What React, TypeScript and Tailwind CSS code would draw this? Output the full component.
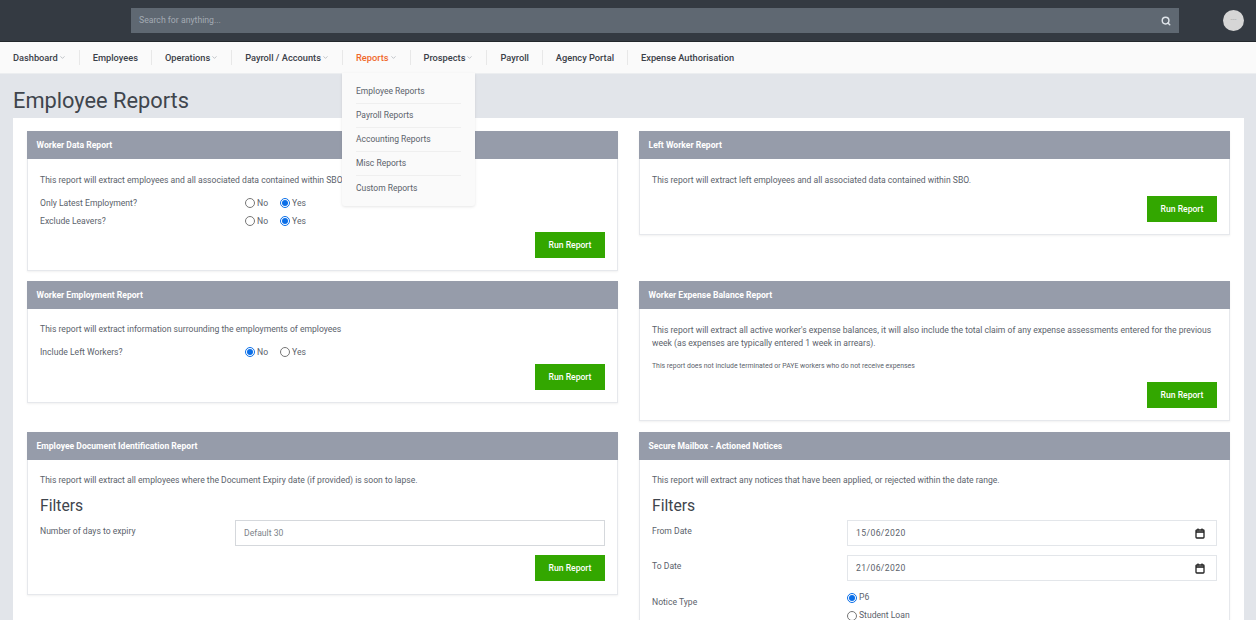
import { ChevronDown, Search } from 'lucide-react'
import type { ReactNode } from 'react'

const navItems = [
  { label: 'Dashboard', caret: true },
  { label: 'Employees' },
  { label: 'Operations', caret: true },
  { label: 'Payroll / Accounts', caret: true },
  { label: 'Reports', caret: true, active: true },
  { label: 'Prospects', caret: true },
  { label: 'Payroll' },
  { label: 'Agency Portal' },
  { label: 'Expense Authorisation' },
]

const menuItems = ['Employee Reports', 'Payroll Reports', 'Accounting Reports', 'Misc Reports', 'Custom Reports']

function Radio({ label, checked }: { label: string; checked?: boolean }) {
  return (
    <label className="flex items-center gap-[2px]">
      <input type="radio" readOnly checked={!!checked} className="m-0 h-[10px] w-[10px] accent-[#0b6fe8]" />
      <span>{label}</span>
    </label>
  )
}

function RunButton() {
  return (
    <div className="flex justify-end">
      <button className="h-[26px] w-[70px] bg-[#33a700] text-[8.6px] font-medium text-white">Run Report</button>
    </div>
  )
}

function Card({ title, className, children }: { title: string; className?: string; children: ReactNode }) {
  return (
    <div className={'bg-white shadow-[0_1px_2px_rgba(0,0,0,0.06)] ' + (className ?? '')}>
      <div className="flex h-[28px] items-center bg-[#969caa] pl-[9.5px] pt-px text-[8.6px] font-bold text-white">{title}</div>
      <div className="border-x border-b border-[#e6e8ec] px-[12px] pb-[12px] pt-[14px] text-[8.6px] leading-[13px] text-[#5b626b]">
        {children}
      </div>
    </div>
  )
}

function RadioRow({ label, no, yes }: { label: string; no?: boolean; yes?: boolean }) {
  return (
    <div className="flex h-[18px] items-center">
      <div className="w-[205px]">{label}</div>
      <div className="flex gap-[12px]">
        <Radio label="No" checked={no} />
        <Radio label="Yes" checked={yes} />
      </div>
    </div>
  )
}

function DateField({ label, value, rowClass }: { label: string; value: string; rowClass: string }) {
  return (
    <div className={'flex items-start ' + rowClass}>
      <div className="w-[195px] pt-[5px]">{label}</div>
      <div className="flex h-[26px] flex-1 items-center justify-between border border-[#e3e6ea] pl-[8px] pr-[11px]">
        <span className="tracking-[0.4px]">{value}</span>
        <svg width="10" height="11" viewBox="0 0 10 11" fill="none" stroke="#222" strokeWidth="1.3">
          <rect x="1" y="2" width="8" height="8" rx="0.8" />
          <path d="M1 4h8" strokeWidth="1.6" />
          <path d="M3 0.5v2M7 0.5v2" />
        </svg>
      </div>
    </div>
  )
}

export default function App() {
  return (
    <div className="relative h-[620px] overflow-hidden bg-[#e2e5ea] font-['Roboto',sans-serif]">
      {/* Top bar */}
      <div className="flex h-[42px] items-center border-b border-[#23272c] bg-[#343a42] pl-[131px] pr-[12px]">
        <div className="flex h-[25px] w-[1048px] items-center justify-between bg-[#5f6872] pl-[8px] pr-[8px] text-[8.7px] text-[#a3aab2]">
          <span>Search for anything...</span>
          <Search size={10} strokeWidth={3.5} className="text-[#dfe4ea]" />
        </div>
        <div className="ml-auto flex h-[21px] w-[21px] items-center justify-center rounded-full bg-[#d6d6d6] text-[7px] leading-none text-[#aaa]">
          ---
        </div>
      </div>

      {/* Nav */}
      <div className="flex h-[32px] items-center border-b border-[#eceef0] bg-[#fafafa] pl-[13px] text-[9.25px] font-medium text-[#3a4048]">
        {navItems.map((n, i) => (
          <div key={n.label} className="flex items-center">
            {i > 0 && <div className="mx-[13px] h-[15px] w-px bg-[#e8e8e8]" />}
            <span className={n.active ? 'text-[#f0682a]' : ''}>{n.label}</span>
            {n.caret && <ChevronDown size={7} strokeWidth={2} className="ml-[1px] text-[#9a9fa6]" />}
          </div>
        ))}
      </div>

      {/* Reports dropdown */}
      <div className="absolute left-[342px] top-[73px] z-10 w-[133px] rounded-b-[3px] bg-[#fafafa] px-[14px] pb-[6px] pt-[7px] text-[8.5px] text-[#5b626b] shadow-[0_1px_3px_rgba(0,0,0,0.1)]">
        {menuItems.map((m, i) => (
          <div key={m} className={'flex h-[24px] items-center ' + (i < menuItems.length - 1 ? 'border-b border-[#efefef]' : '')}>
            {m}
          </div>
        ))}
      </div>

      <h1 className="ml-[13px] mt-[12px] text-[21.8px] font-normal leading-[30px] text-[#3f454d]">Employee Reports</h1>

      {/* Main panel */}
      <div className="ml-[13px] mr-[12px] mt-[2px] bg-white pl-[14px] pr-[14px] pt-[13px]">
        <div className="grid grid-cols-2 items-start gap-x-[21px] gap-y-[10px]">
          <Card title="Worker Data Report">
            <p className="mb-[7px] mt-[1px]">This report will extract employees and all associated data contained within SBO.</p>
            <RadioRow label="Only Latest Employment?" yes />
            <RadioRow label="Exclude Leavers?" yes />
            <div className="mt-[2px]" />
            <RunButton />
          </Card>
          <Card title="Left Worker Report">
            <p className="mb-[9px] mt-[1px]">This report will extract left employees and all associated data contained within SBO.</p>
            <RunButton />
          </Card>
          <Card title="Worker Employment Report">
            <p className="mb-[7px]">This report will extract information surrounding the employments of employees</p>
            <RadioRow label="Include Left Workers?" no />
            <div className="mt-[3px]" />
            <RunButton />
          </Card>
          <Card title="Worker Expense Balance Report">
            <p className="mt-[1px]">
              This report will extract all active worker's expense balances, it will also include the total claim of any expense assessments entered for the previous week (as expenses are typically entered 1 week in arrears).
            </p>
            <p className="mb-[9px] mt-[10px] text-[6.9px]">This report does not include terminated or PAYE workers who do not receive expenses</p>
            <RunButton />
          </Card>
          <Card title="Employee Document Identification Report" className="mt-px">
            <p>This report will extract all employees where the Document Expiry date (if provided) is soon to lapse.</p>
            <h2 className="mb-[4px] mt-[9px] text-[15.7px] leading-[20px] text-[#3f454d]">Filters</h2>
            <div className="mb-[9px] flex items-start">
              <div className="w-[195px] pt-[5px]">Number of days to expiry</div>
              <div className="flex h-[26px] flex-1 items-center border border-[#d5d8dc] pl-[8px] text-[#7d838a]">Default 30</div>
            </div>
            <RunButton />
            <div className="h-px" />
          </Card>
          <Card title="Secure Mailbox - Actioned Notices" className="mt-px">
            <p>This report will extract any notices that have been applied, or rejected within the date range.</p>
            <h2 className="mb-[4px] mt-[9px] text-[15.7px] leading-[20px] text-[#3f454d]">Filters</h2>
            <DateField label="From Date" value="15/06/2020" rowClass="h-[35px]" />
            <DateField label="To Date" value="21/06/2020" rowClass="h-[36px]" />
            <div className="flex items-start">
              <div className="w-[195px] pt-[5px]">Notice Type</div>
              <div className="flex flex-col gap-[5px]">
                <Radio label="P6" checked />
                <Radio label="Student Loan" />
              </div>
            </div>
          </Card>
        </div>
      </div>
    </div>
  )
}
